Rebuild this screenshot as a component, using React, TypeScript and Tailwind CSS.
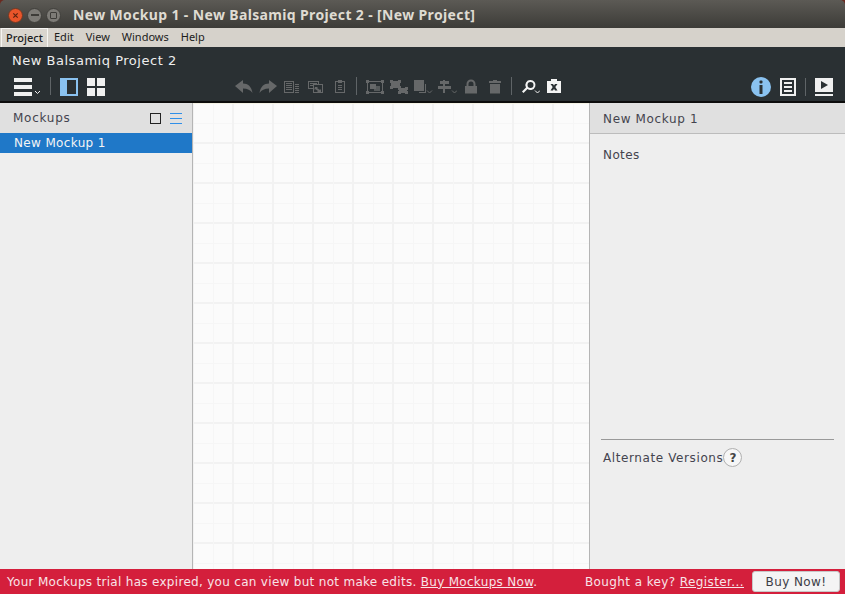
const sans = "font-['DejaVu_Sans',sans-serif]";

function Chevron({ x, y }: { x: number; y: number }) {
  return <path d={`M${x} ${y}l2.5 2.5 2.5-2.5`} fill="none" stroke="currentColor" strokeWidth="1" />;
}

function Sep({ className = "" }: { className?: string }) {
  return <div className={`w-px h-[18px] bg-[#5f6467] ${className}`} />;
}

function ToolIcon({ w, children, className = "" }: { w: number; children: React.ReactNode; className?: string }) {
  return (
    <svg width={w} height={20} viewBox={`0 0 ${w} 20`} className={`shrink-0 ${className}`} fill="currentColor">
      {children}
    </svg>
  );
}

function Handle({ x, y }: { x: number; y: number }) {
  return <rect x={x} y={y} width="3" height="3" />;
}

function Toolbar() {
  const off = "text-[#666869]";
  return (
    <div className="flex items-center h-[30px] text-[#f0f0f0]">
      <ToolIcon w={26} className="ml-[14px] text-[#f0f0f0]">
        <rect x="0" y="2" width="18" height="4" />
        <rect x="0" y="9" width="18" height="4" />
        <rect x="0" y="16" width="18" height="4" />
        <Chevron x={21} y={15} />
      </ToolIcon>
      <Sep className="ml-[10px]" />
      <ToolIcon w={18} className="ml-[9px] text-[#8ac2f0]">
        <path fillRule="evenodd" d="M0 2h18v18H0zM7 4v14h9V4z" />
      </ToolIcon>
      <ToolIcon w={18} className="ml-[9px] text-[#f0f0f0]">
        <rect x="0" y="2" width="8" height="8" />
        <rect x="10" y="2" width="8" height="8" />
        <rect x="0" y="12" width="8" height="8" />
        <rect x="10" y="12" width="8" height="8" />
      </ToolIcon>

      <ToolIcon w={18} className={`ml-[130px] ${off}`}>
        <path d="M0 10l8-6v3.500c5 0 8.500 3 9.500 9.500-2-3-5-4.500-9.500-4.500V17z" />
      </ToolIcon>
      <ToolIcon w={18} className={`ml-[6px] ${off}`}>
        <path d="M18 10l-8-6v3.500C5 7.500 1.500 10.500.5 17c2-3 5-4.500 9.500-4.500V17z" />
      </ToolIcon>
      <ToolIcon w={16} className={`ml-[7px] ${off}`}>
        <path fillRule="evenodd" d="M0 5h10v12H0zM1 6v10h8V6zM2 7h6v1H2zM2 9h6v1H2zM2 11h6v1H2zM2 13h6v1H2zM11 8h4v1h-4zM11 10h4v1h-4zM11 12h4v1h-4zM11 14h4v1h-4zM11 16h4v1h-4z" />
      </ToolIcon>
      <ToolIcon w={16} className={`ml-[8px] ${off}`}>
        <path fillRule="evenodd" d="M0 5h11v3h4v9H5v-4H0zM1 6v6h4V8h5V6zM2 7h7v1H2zM2 9h3v1H2zM6 9v7h8V9zM7 11h3l-1 1 3 2 1-1v3H9l1-1-3-2-1 1z" />
      </ToolIcon>
      <ToolIcon w={12} className={`ml-[10px] ${off}`}>
        <path fillRule="evenodd" d="M4 4h4v1h3v12H1V5h3zM2 6v10h8V6H8v1H4V6zM4 9h4v1H4zM4 11h4v1H4zM4 13h4v1H4z" />
      </ToolIcon>
      <Sep className="ml-[10px]" />
      <ToolIcon w={18} className={`ml-[9px] ${off}`}>
        <Handle x={0} y={4} />
        <Handle x={15} y={4} />
        <Handle x={0} y={15} />
        <Handle x={15} y={15} />
        <path d="M3 5h12v1H3zM3 16h12v1H3zM1 7h1v8H1zM16 7h1v8h-1z" />
        <rect x="4" y="8" width="6" height="5" />
        <rect x="8" y="10" width="6" height="5" opacity="0.75" />
      </ToolIcon>
      <ToolIcon w={18} className={`ml-[6px] ${off}`}>
        <rect x="1" y="5" width="9" height="7" />
        <Handle x={0} y={4} />
        <Handle x={8} y={4} />
        <Handle x={0} y={10} />
        <Handle x={8} y={10} />
        <rect x="9" y="12" width="8" height="5" />
        <Handle x={8} y={11} />
        <Handle x={15} y={11} />
        <Handle x={8} y={15} />
        <Handle x={15} y={15} />
      </ToolIcon>
      <ToolIcon w={19} className={`ml-[6px] ${off}`}>
        <rect x="0" y="4" width="10" height="11" />
        <path d="M11 8h1v9H5v-1h6z" />
        <Chevron x={13} y={14.500} />
      </ToolIcon>
      <ToolIcon w={19} className={`ml-[5px] ${off}`}>
        <path d="M5 4h2v1h4v3H7v2h6v3H7v2h0v2H5v-4H0v-3h5V8H2V5h3z" />
        <Chevron x={14} y={14.500} />
      </ToolIcon>
      <ToolIcon w={12} className={`ml-[8px] ${off}`}>
        <path fillRule="evenodd" d="M0 10h1.500V8a4.500 4.500 0 0 1 9 0v2H12v7.500H0zM3.500 10h5V8a2.500 2.500 0 0 0-5 0z" />
      </ToolIcon>
      <ToolIcon w={12} className={`ml-[12px] ${off}`}>
        <path d="M4 4h4v1h4v2H0V5h4zM1 8h10v9.500H1z" />
      </ToolIcon>
      <Sep className="ml-[10px]" />
      <ToolIcon w={18} className="ml-[10px] text-[#f4f4f4]">
        <path fillRule="evenodd" d="M8.500 4a5 5 0 1 1-3 9L1.500 17 0 15.500l4-4A5 5 0 0 1 8.500 4zm0 2a3 3 0 1 0 0 6 3 3 0 0 0 0-6z" />
        <Chevron x={13} y={14.500} />
      </ToolIcon>
      <ToolIcon w={14} className="ml-[7px] text-[#f4f4f4]">
        <path fillRule="evenodd" d="M4 3h6v2h4v12H0V5h4zM3.500 8l2.200 3-2.200 3.500H6l1-1.800 1 1.800h2.500L8.300 11l2.200-3H8L7 9.500 6 8z" />
      </ToolIcon>

      <div className="flex-1" />

      <svg width="20" height="20" viewBox="0 0 20 20" className="shrink-0 mt-[2px] mr-[9px] -ml-[1px]">
        <circle cx="10" cy="10" r="10" fill="#8ac2f0" />
        <rect x="8.500" y="3.500" width="3" height="3" rx="1" fill="#2a3033" />
        <rect x="8.500" y="8" width="3" height="9" fill="#2a3033" />
      </svg>
      <svg width="16" height="18" viewBox="0 0 16 18" className="shrink-0 mt-[2px] mr-[9px]">
        <path fillRule="evenodd" fill="#f0f0f0" d="M0 0h16v18H0zM2 2v14h12V2z" />
        <path fill="#f0f0f0" d="M4 4h8v2H4zM4 8h8v2H4zM4 12h8v2H4z" />
      </svg>
      <Sep className="mt-[2px]" />
      <svg width="18" height="18" viewBox="0 0 18 18" className="shrink-0 mt-[2px] ml-[9px] mr-[12px]">
        <rect x="0" y="0" width="18" height="14" fill="#f0f0f0" />
        <path d="M6 3l7 4-7 4z" fill="#2a3033" />
        <rect x="0" y="16" width="18" height="2" fill="#f0f0f0" />
      </svg>
    </div>
  );
}

export default function App() {
  return (
    <div className={`w-[845px] h-[594px] overflow-hidden flex flex-col bg-[#eeeeee] ${sans}`}>
      <div className="h-[28px] shrink-0 bg-[#6a2a20]">
        <div className="h-full rounded-t-[5px] bg-gradient-to-b from-[#5c5a55] to-[#3d3c38] flex items-center pl-[8px]">
          <div className="flex gap-[4px] items-center mt-[2px]">
            <div className="w-[15px] h-[15px] rounded-full bg-[#e9552a] border border-[#6e3a26] flex items-center justify-center">
              <svg width="7" height="7" viewBox="0 0 8 8">
                <path d="M1.500 1.500l5 5M6.500 1.500l-5 5" stroke="#5c2410" strokeWidth="1.400" />
              </svg>
            </div>
            <div className="w-[15px] h-[15px] rounded-full bg-[#7d7b76] border border-[#403f3b] flex items-center justify-center">
              <div className="w-[8px] h-[2px] bg-[#3d3c38]" />
            </div>
            <div className="w-[15px] h-[15px] rounded-full bg-[#7d7b76] border border-[#403f3b] flex items-center justify-center">
              <div className="w-[7px] h-[7px] border border-[#3d3c38] rounded-[1px]" />
            </div>
          </div>
          <span className="ml-[12px] text-[14px] font-bold text-[#dfdbd2] font-['Noto_Sans',sans-serif] whitespace-nowrap tracking-[0.36px]">
            New Mockup 1 - New Balsamiq Project 2 - [New Project]
          </span>
        </div>
      </div>

      <div className="h-[19px] shrink-0 bg-[#d6d2cb] flex items-center text-[11px] text-[#1c1c1c] font-['Noto_Sans',sans-serif]">
        <span className="ml-[1px] w-[47px] h-[19px] flex items-center justify-center border border-b-0 border-[#f6f5f2] bg-[#d9d5ce] font-medium">Project</span>
        <span className="ml-[6px]">Edit</span>
        <span className="ml-[12px]">View</span>
        <span className="ml-[12px]">Windows</span>
        <span className="ml-[12px]">Help</span>
      </div>

      <div className="h-[56px] shrink-0 bg-[#2a3033] border-b-2 border-[#0c0c0c] flex flex-col">
        <div className="h-[24px] flex items-center pl-[12px] pt-[4px] text-[13px] text-[#eeeeee] tracking-[0.52px]">New Balsamiq Project 2</div>
        <Toolbar />
      </div>

      <div className="flex-1 flex min-h-0">
        <div className="w-[193px] shrink-0 border-r border-[#b5b5b5] bg-[#eeeeee]">
          <div className="h-[30px] bg-[#e0e0e0] flex items-center pl-[13px] pr-[10px] text-[12px] text-[#44444e]">
            <span className="tracking-[0.75px]">Mockups</span>
            <div className="ml-auto w-[11px] h-[11px] border border-[#222222] mr-[9px]" />
            <div className="w-[12px] h-[11px] flex flex-col justify-between">
              <div className="h-px bg-[#2f8fe8]" />
              <div className="h-px bg-[#2f8fe8]" />
              <div className="h-px bg-[#2f8fe8]" />
            </div>
          </div>
          <div className="h-[20px] bg-[#1f78c8] flex items-center pl-[14px] text-[12px] text-[#f4f4f4] tracking-[0.35px]">New Mockup 1</div>
        </div>

        <div className="w-[396px] shrink-0 border-t border-[#f4f2e4] bg-[#fbfbfb] bg-[linear-gradient(to_right,transparent_19px,#f6f6f6_19px,#f6f6f6_20px,transparent_20px,transparent_38px,#f2f2f2_38px,#f2f2f2_40px),linear-gradient(to_bottom,transparent_19px,#f6f6f6_19px,#f6f6f6_20px,transparent_20px,transparent_38px,#f2f2f2_38px,#f2f2f2_40px)] bg-[length:40px_40px] bg-[position:1px_0px]" />

        <div className="flex-1 border-l border-[#b5b5b5] bg-[#eeeeee] flex flex-col text-[12px] text-[#44444e]">
          <div className="h-[31px] shrink-0 bg-[#e0e0e0] border-b border-[#bcbcbc] flex items-center pl-[13px] pt-[1px] tracking-[0.65px]">New Mockup 1</div>
          <div className="pl-[13px] pt-[12px] flex-1 tracking-[0.4px]">Notes</div>
          <div className="ml-[11px] mr-[11px] border-t border-[#999999] pt-[8px] h-[130px]">
            <div className="flex items-center pl-[2px]">
              <span className="tracking-[0.6px]">Alternate Versions</span>
              <span className="w-[19px] h-[19px] rounded-full border border-[#b0b0b0] bg-[#f6f6f6] flex items-center justify-center text-[12px] font-bold text-[#444444]">?</span>
            </div>
          </div>
        </div>
      </div>

      <div className="h-[25px] shrink-0 bg-[#d41f3c] flex items-center pl-[7px] pr-[5px] text-[12px] text-[#f8e4e8]">
        <span className="tracking-[0.3px]">Your Mockups trial has expired, you can view but not make edits. <span className="underline">Buy Mockups Now</span>.</span>
        <span className="ml-auto tracking-[0.4px]">Bought a key? <span className="underline">Register...</span></span>
        <button className="ml-[8px] w-[88px] h-[21px] rounded-[3px] bg-[#f4f4f4] border border-[#c8c8c8] text-[12px] text-[#3c3c46] tracking-[0.4px]">Buy Now!</button>
      </div>
    </div>
  );
}
